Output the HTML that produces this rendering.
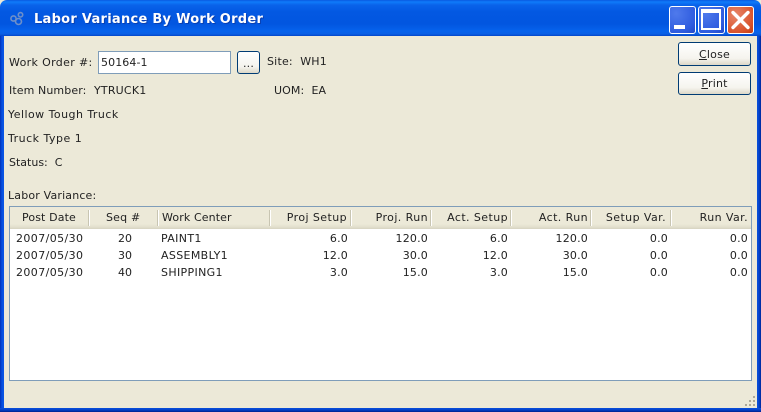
<!DOCTYPE html>
<html>
<head>
<meta charset="utf-8">
<style>
html,body{margin:0;padding:0;}
body{width:761px;height:412px;overflow:hidden;position:relative;background:#ece9d8;font-family:"DejaVu Sans","Liberation Sans",sans-serif;font-size:11px;color:#222;}
.a{position:absolute;white-space:nowrap;line-height:14px;letter-spacing:.35px;}
.r{position:absolute;white-space:nowrap;line-height:14px;text-align:right;letter-spacing:.2px;}
.h{letter-spacing:.42px;}
#tb{position:absolute;left:0;top:0;width:761px;height:36px;border-radius:7px 7px 0 0;background:linear-gradient(180deg,#0a5ae0 0,#0f7bfa 2px,#0a63ea 5px,#0358e2 12px,#0256e0 24px,#0663ec 31px,#0a5fe4 34px,#0346c8 36px);}
#l{position:absolute;left:0;top:36px;width:4px;height:372px;background:linear-gradient(90deg,#0030b8,#0650e0 50%,#0a55e5);}
#rb{position:absolute;left:757px;top:36px;width:4px;height:372px;background:linear-gradient(90deg,#0a50dc,#0444cc 50%,#00259a);}
#b{position:absolute;left:0;top:408px;width:761px;height:4px;background:linear-gradient(180deg,#0a50dc,#0340c8 50%,#00208c);}
.t{position:absolute;left:34px;top:12px;font-size:13px;font-weight:bold;color:#fff;letter-spacing:.27px;line-height:16px;white-space:nowrap;text-shadow:1px 1px 0 #0a3fb0;}
.wb{position:absolute;top:6px;width:25px;height:26px;border:1px solid #fff;border-radius:3px;box-sizing:content-box;background:radial-gradient(circle at 25% 25%,#4f7aec,#2f5cdf 70%,#2148c8);}
.btn{position:absolute;box-sizing:border-box;background:linear-gradient(180deg,#fff,#f5f4ee 70%,#dcd8c8);border:1px solid #003c74;border-radius:3px;text-align:center;color:#222;letter-spacing:.2px;}
#tbl{position:absolute;left:9px;top:206px;width:743px;height:175px;box-sizing:border-box;border:1px solid #7f9db9;background:#fff;}
#hd{position:absolute;left:10px;top:207px;width:741px;height:22px;background:linear-gradient(180deg,#ece9d8 0,#ece9d8 17px,#e2dfcd 20px,#d6d3c0 22px);}
.s{position:absolute;top:210px;width:1px;height:16px;background:#c8c5b2;border-right:1px solid #fff;}
</style>
</head>
<body>
<div id="tb"></div>
<div id="l"></div>
<div id="rb"></div>
<div id="b"></div>
<svg style="position:absolute;left:9px;top:11px" width="16" height="16" viewBox="0 0 16 16" fill="none" stroke="#6d8fc9" stroke-width="1.6"><circle cx="4.5" cy="7.5" r="2.6"/><circle cx="9.5" cy="10.5" r="3"/><circle cx="11.5" cy="3.8" r="2.2"/></svg>
<div class="t">Labor Variance By Work Order</div>

<div class="wb" style="left:669px"></div>
<div style="position:absolute;left:674px;top:25px;width:11px;height:4px;background:#fff"></div>
<div class="wb" style="left:698px"></div>
<div style="position:absolute;left:701px;top:9px;width:20px;height:21px;box-sizing:border-box;border:2px solid #fff;border-top-width:4px"></div>
<div class="wb" style="left:727px;background:radial-gradient(circle at 30% 30%,#e8876a,#d9532c 70%,#c23c12)"></div>
<svg style="position:absolute;left:727px;top:6px" width="27" height="28" viewBox="0 0 27 28"><path d="M6 6.5L21 21.5M21 6.5L6 21.5" stroke="#fff" stroke-width="3.4" stroke-linecap="round"/></svg>

<div class="a" style="left:9px;top:56px">Work Order #:</div>
<div style="position:absolute;left:98px;top:51px;width:133px;height:23px;box-sizing:border-box;border:1px solid #7f9db9;background:#fff"></div>
<div class="a" style="left:101px;top:56px;letter-spacing:.1px">50164-1</div>
<div class="btn" style="left:237px;top:51px;width:23px;height:23px;line-height:24px">...</div>
<div class="a" style="left:267px;top:55px;letter-spacing:.2px">Site:&nbsp; WH1</div>
<div class="a" style="left:9px;top:84px;letter-spacing:.1px">Item Number:</div>
<div class="a" style="left:94px;top:84px;letter-spacing:.2px">YTRUCK1</div>
<div class="a" style="left:274px;top:84px;letter-spacing:.1px">UOM:&nbsp; EA</div>
<div class="a" style="left:8px;top:108px;letter-spacing:.46px">Yellow Tough Truck</div>
<div class="a" style="left:8px;top:132px;letter-spacing:.5px">Truck Type 1</div>
<div class="a" style="left:9px;top:156px;letter-spacing:0">Status:&nbsp; C</div>
<div class="a" style="left:8px;top:189px;letter-spacing:.17px">Labor Variance:</div>

<div class="btn" style="left:678px;top:42px;width:73px;height:24px;line-height:23px"><u>C</u>lose</div>
<div class="btn" style="left:678px;top:72px;width:73px;height:23px;line-height:22px"><u>P</u>rint</div>

<div id="tbl"></div>
<div id="hd"></div>
<div class="s" style="left:88px"></div>
<div class="s" style="left:157px"></div>
<div class="s" style="left:269px"></div>
<div class="s" style="left:350px"></div>
<div class="s" style="left:430px"></div>
<div class="s" style="left:510px"></div>
<div class="s" style="left:590px"></div>
<div class="s" style="left:670px"></div>

<div class="a" style="left:22px;top:211px;letter-spacing:.12px">Post Date</div>
<div class="a" style="left:106px;top:211px;letter-spacing:.2px">Seq #</div>
<div class="a" style="left:162px;top:211px;letter-spacing:.12px">Work Center</div>
<div class="r h" style="left:270px;width:77px;top:211px">Proj Setup</div>
<div class="r h" style="left:351px;width:77px;top:211px">Proj. Run</div>
<div class="r h" style="left:431px;width:77px;top:211px">Act. Setup</div>
<div class="r h" style="left:511px;width:77px;top:211px">Act. Run</div>
<div class="r h" style="left:591px;width:75px;top:211px">Setup Var.</div>
<div class="r h" style="left:671px;width:77px;top:211px">Run Var.</div>

<div class="a" style="left:16px;top:232px;letter-spacing:.4px">2007/05/30</div>
<div class="a" style="left:118px;top:232px;letter-spacing:0">20</div>
<div class="a" style="left:161px;top:232px">PAINT1</div>
<div class="r" style="left:270px;width:78px;top:232px">6.0</div>
<div class="r" style="left:351px;width:77px;top:232px">120.0</div>
<div class="r" style="left:431px;width:77px;top:232px">6.0</div>
<div class="r" style="left:511px;width:77px;top:232px">120.0</div>
<div class="r" style="left:591px;width:77px;top:232px">0.0</div>
<div class="r" style="left:671px;width:77px;top:232px">0.0</div>

<div class="a" style="left:16px;top:249px;letter-spacing:.4px">2007/05/30</div>
<div class="a" style="left:118px;top:249px;letter-spacing:0">30</div>
<div class="a" style="left:161px;top:249px">ASSEMBLY1</div>
<div class="r" style="left:270px;width:78px;top:249px">12.0</div>
<div class="r" style="left:351px;width:77px;top:249px">30.0</div>
<div class="r" style="left:431px;width:77px;top:249px">12.0</div>
<div class="r" style="left:511px;width:77px;top:249px">30.0</div>
<div class="r" style="left:591px;width:77px;top:249px">0.0</div>
<div class="r" style="left:671px;width:77px;top:249px">0.0</div>

<div class="a" style="left:16px;top:266px;letter-spacing:.4px">2007/05/30</div>
<div class="a" style="left:118px;top:266px;letter-spacing:0">40</div>
<div class="a" style="left:161px;top:266px">SHIPPING1</div>
<div class="r" style="left:270px;width:78px;top:266px">3.0</div>
<div class="r" style="left:351px;width:77px;top:266px">15.0</div>
<div class="r" style="left:431px;width:77px;top:266px">3.0</div>
<div class="r" style="left:511px;width:77px;top:266px">15.0</div>
<div class="r" style="left:591px;width:77px;top:266px">0.0</div>
<div class="r" style="left:671px;width:77px;top:266px">0.0</div>

<svg style="position:absolute;left:744px;top:395px" width="12" height="12" viewBox="0 0 12 12"><g fill="#aca899"><rect x="9" y="1" width="2" height="2"/><rect x="5" y="5" width="2" height="2"/><rect x="9" y="5" width="2" height="2"/><rect x="1" y="9" width="2" height="2"/><rect x="5" y="9" width="2" height="2"/><rect x="9" y="9" width="2" height="2"/></g></svg>
</body>
</html>
